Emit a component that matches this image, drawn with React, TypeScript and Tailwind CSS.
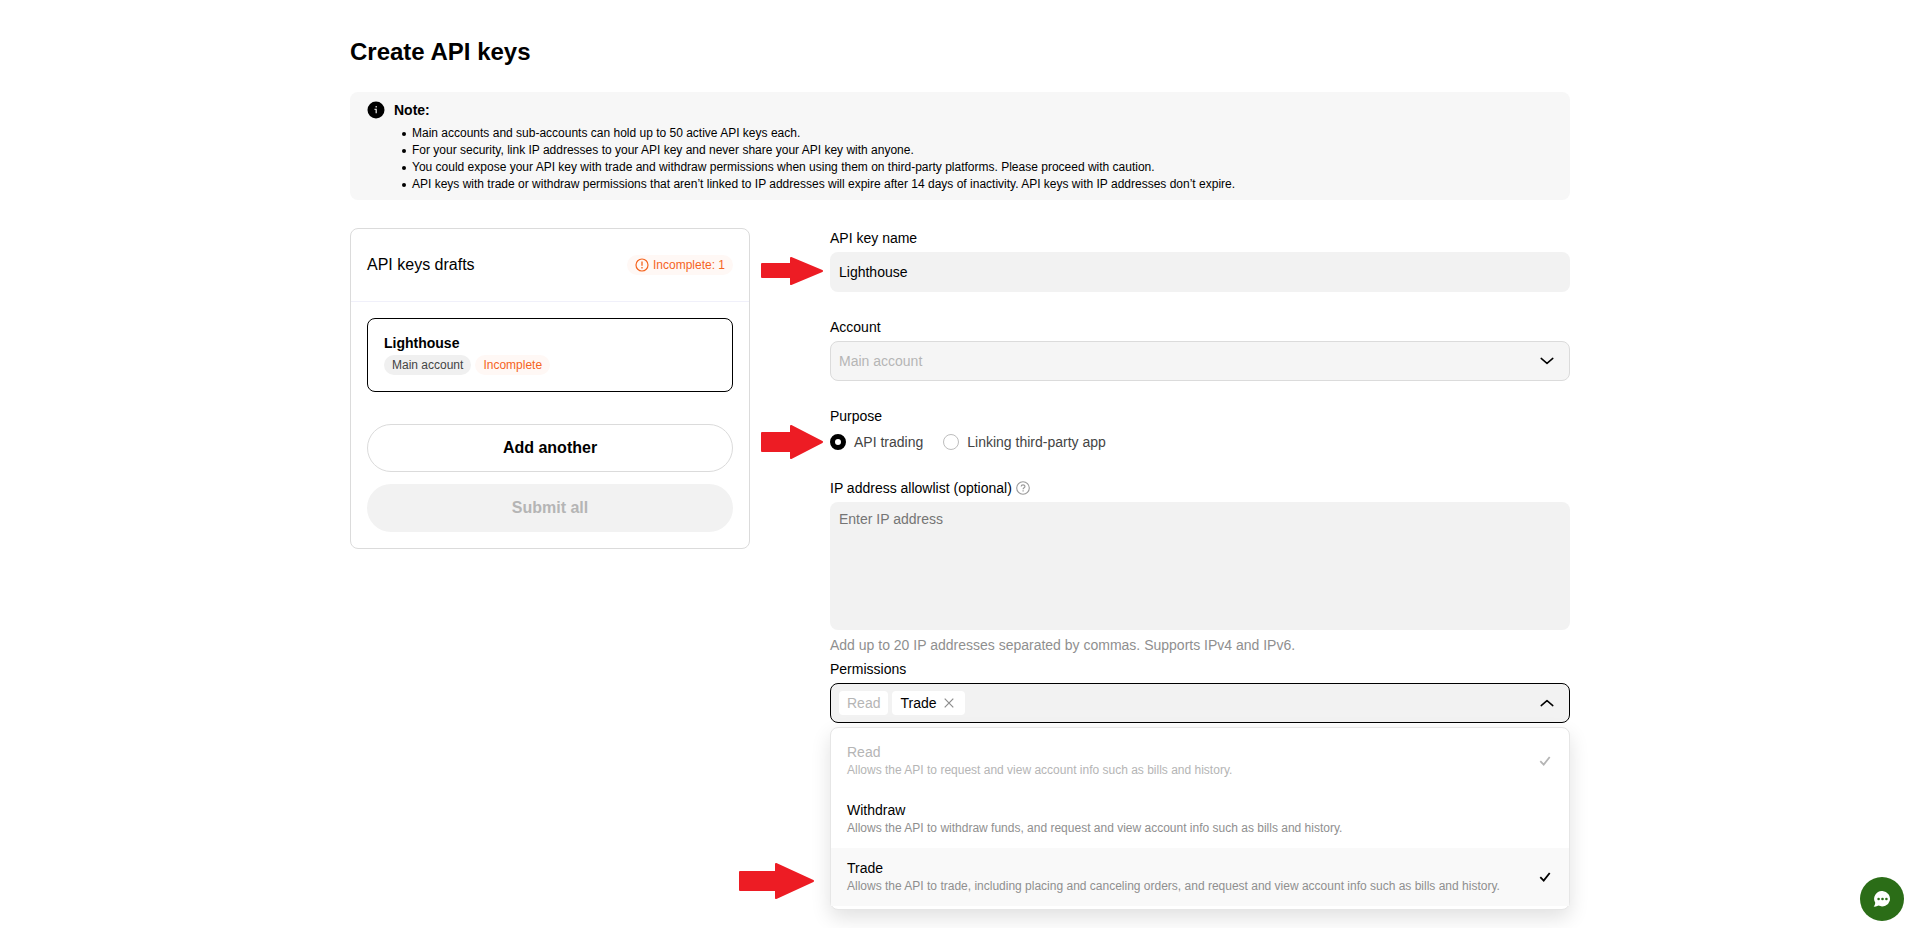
import { useState } from "react";

const notes = [
  "Main accounts and sub-accounts can hold up to 50 active API keys each.",
  "For your security, link IP addresses to your API key and never share your API key with anyone.",
  "You could expose your API key with trade and withdraw permissions when using them on third-party platforms. Please proceed with caution.",
  "API keys with trade or withdraw permissions that aren’t linked to IP addresses will expire after 14 days of inactivity. API keys with IP addresses don’t expire.",
];

const permissions = [
  { name: "Read", text: "Allows the API to request and view account info such as bills and history.", locked: true },
  { name: "Withdraw", text: "Allows the API to withdraw funds, and request and view account info such as bills and history.", locked: false },
  {
    name: "Trade",
    text: "Allows the API to trade, including placing and canceling orders, and request and view account info such as bills and history.",
    locked: false,
  },
];

function Arrow({ className, shaft, head }: { className: string; shaft: string; head: string }) {
  return (
    <svg className={`absolute overflow-visible fill-[#ed1c24] stroke-[#ed1c24] ${className}`} strokeWidth="2" strokeLinejoin="round" aria-hidden="true">
      <path d={shaft} />
      <path d={head} />
    </svg>
  );
}

function Chevron({ up = false }: { up?: boolean }) {
  return (
    <svg className="h-2 w-[14px]" viewBox="0 0 14 8" fill="none" stroke="#000" strokeWidth="1.5" strokeLinecap="round" strokeLinejoin="round" aria-hidden="true">
      <path d={up ? "M1.2 6.6 7 1.6l5.800 5" : "M1.200 1.400 7 6.400l5.800-5"} />
    </svg>
  );
}

function Note() {
  return (
    <section className="mt-6 rounded-lg bg-[#f7f7f7] px-[17px] py-2">
      <div className="flex items-center gap-[9px]">
        <svg className="size-[18px]" viewBox="0 0 18 18" aria-hidden="true">
          <circle cx="9" cy="9" r="8.500" fill="#000" />
          <path d="M9.200 4.900v1.500M7.500 8.300h1.700v4" fill="none" stroke="#ddd" strokeWidth="1.300" />
        </svg>
        <h2 className="text-sm leading-5 font-bold">Note:</h2>
      </div>
      <ul className="mt-1 pt-px pl-[35px] text-xs leading-[17px] -mb-px">
        {notes.map((n) => (
          <li key={n} className="flex items-center gap-[6px]">
            <span className="size-1 shrink-0 rounded-full bg-black" />
            {n}
          </li>
        ))}
      </ul>
    </section>
  );
}

function Drafts() {
  return (
    <aside className="w-[400px] shrink-0 rounded-lg border border-[#dbdbdb]">
      <div className="flex h-[73px] items-center justify-between border-b border-[#f0f0fa] px-4">
        <h2 className="text-base leading-6">API keys drafts</h2>
        <span className="flex h-5 items-center gap-1 rounded-full bg-[#fff8f5] px-2 text-xs text-[#f5641e]">
          <svg className="size-[14px]" viewBox="0 0 14 14" fill="none" stroke="currentColor" aria-hidden="true">
            <circle cx="7" cy="7" r="6" strokeWidth="1.200" />
            <path d="M7 3.600v4.200M7 9v1.400" strokeWidth="1.300" />
          </svg>
          Incomplete: 1
        </span>
      </div>
      <div className="p-4">
        <div className="rounded-lg border border-black px-4 pt-[14px] pb-4">
          <h3 className="mb-0.5 text-sm leading-5 font-bold">Lighthouse</h3>
          <div className="flex gap-1">
            <span className="h-5 rounded-full bg-[#f0f0f0] px-2 text-xs leading-5 text-[#444]">Main account</span>
            <span className="h-5 rounded-full bg-[#fff8f5] px-2 text-xs leading-5 text-[#f5641e]">Incomplete</span>
          </div>
        </div>
        <button type="button" className="mt-8 block h-12 w-full rounded-full border border-[#dbdbdb] text-base font-bold">
          Add another
        </button>
        <button type="button" disabled className="mt-3 block h-12 w-full rounded-full bg-[#f2f2f2] text-base font-bold text-[#b5b5b5]">
          Submit all
        </button>
      </div>
    </aside>
  );
}

function PermissionPicker() {
  const [withdraw, setWithdraw] = useState(false);
  const [trade, setTrade] = useState(true);
  const selected = (name: string) => name === "Read" || (name === "Withdraw" ? withdraw : trade);
  const toggle = (name: string) => (name === "Withdraw" ? setWithdraw(!withdraw) : setTrade(!trade));
  return (
    <div className="mt-1">
      <span id="permissions-label" className="block text-sm leading-5">Permissions</span>
      <div
        role="combobox"
        aria-expanded="true"
        aria-controls="permission-list"
        aria-labelledby="permissions-label"
        tabIndex={0}
        className="mt-1 flex h-10 items-center gap-1 rounded-lg border border-black bg-[#f2f2f2] pr-[15px] pl-2 text-sm"
      >
        {permissions.filter((p) => selected(p.name)).map((p) => (
          <span key={p.name} className={`flex h-6 items-center rounded bg-white px-2 ${p.locked ? "text-[#b5b5b5]" : ""}`}>
            {p.name}
            {!p.locked && (
              <button type="button" aria-label={`Remove ${p.name}`} className="ml-1 flex size-4 items-center justify-center" onClick={() => toggle(p.name)}>
                <svg className="size-[10px]" viewBox="0 0 10 10" stroke="#8c8c8c" strokeWidth="1.200" aria-hidden="true">
                  <path d="m.7.7 8.600 8.600M9.300.7.7 9.300" />
                </svg>
              </button>
            )}
          </span>
        ))}
        <span className="ml-auto"><Chevron up /></span>
      </div>
      <div className="relative">
        <div
          id="permission-list"
          role="listbox"
          aria-multiselectable="true"
          aria-labelledby="permissions-label"
          className="mt-1 rounded-lg border border-[#e6e6e6] bg-white pt-1 pb-[3px] shadow-[0_8px_20px_rgba(0,0,0,0.12)]"
        >
          {permissions.map((p) => (
            <button
              key={p.name}
              type="button"
              role="option"
              aria-selected={selected(p.name)}
              disabled={p.locked}
              onClick={() => toggle(p.name)}
              className={`flex h-[58px] w-full items-center justify-between pr-[18px] pl-4 text-left ${p.locked ? "text-[#b5b5b5]" : ""} ${p.name === "Trade" ? "bg-[#f9f9f9]" : ""}`}
            >
              <span className="pb-0.5">
                <span className="block text-sm leading-5">{p.name}</span>
                <span className={`block text-xs leading-4 ${p.locked ? "" : "text-[#8f8f8f]"}`}>{p.text}</span>
              </span>
              {selected(p.name) && (
                <svg className="h-[10px] w-3" viewBox="0 0 12 10" fill="none" stroke="currentColor" strokeWidth="1.800" aria-hidden="true">
                  <path d="M1.300 5.200 4.700 8.600 10.700 1" />
                </svg>
              )}
            </button>
          ))}
        </div>
        <Arrow className="top-[136px] -left-[91px] h-9 w-[75px]" shaft="M1 9H38V27H1Z" head="M37 1 74 18 37 35Z" />
      </div>
    </div>
  );
}

function KeyForm() {
  return (
    <form className="min-w-0 flex-1">
      <label htmlFor="key-name" className="block text-sm leading-5">API key name</label>
      <div className="relative mt-1">
        <input id="key-name" defaultValue="Lighthouse" className="block h-10 w-full rounded-lg bg-[#f2f2f2] px-[9px] text-sm outline-none" />
        <Arrow className="top-[5px] -left-[69px] h-7 w-[62px]" shaft="M1 7H30V20H1Z" head="M30 1 61 14 30 27Z" />
      </div>

      <label htmlFor="account" className="mt-[25px] block text-sm leading-5">Account</label>
      <div className="relative mt-1">
        <select id="account" disabled className="block h-10 w-full appearance-none rounded-lg border border-[#dbdbdb] bg-[#f5f5f5] px-2 text-sm text-[#b5b5b5] opacity-100">
          <option>Main account</option>
        </select>
        <span className="pointer-events-none absolute inset-y-0 right-4 flex items-center"><Chevron /></span>
      </div>

      <fieldset className="mt-[25px]">
        <legend className="text-sm leading-5">Purpose</legend>
        <div className="relative mt-[6px] flex gap-5 text-sm leading-5 text-[#444]">
          <label className="flex items-center gap-2">
            <input type="radio" name="purpose" defaultChecked className="size-4 appearance-none rounded-full border border-[#bdbdbd] bg-white checked:border-5 checked:border-black" />
            API trading
          </label>
          <label className="flex items-center gap-2">
            <input type="radio" name="purpose" className="size-4 appearance-none rounded-full border border-[#bdbdbd] bg-white checked:border-5 checked:border-black" />
            Linking third-party app
          </label>
          <Arrow className="-top-[7px] -left-[69px] h-[34px] w-[62px]" shaft="M1 8H30V26H1Z" head="M30 1 61 17 30 33Z" />
        </div>
      </fieldset>

      <div className="mt-[26px] flex items-center gap-1">
        <label htmlFor="ips" className="text-sm leading-5">IP address allowlist (optional)</label>
        <svg className="size-[14px]" viewBox="0 0 14 14" fill="none" stroke="#999" aria-hidden="true">
          <circle cx="7" cy="7" r="6.300" strokeWidth="1.100" />
          <path d="M5.200 5.600C5.200 3.200 8.900 3.300 8.900 5.400 8.900 6.800 7.100 6.700 7.100 8.200M7.100 9.200v1.300" strokeWidth="1.200" />
        </svg>
      </div>
      <textarea id="ips" placeholder="Enter IP address" className="mt-1 block h-32 w-full resize-none rounded-lg bg-[#f2f2f2] px-[9px] py-[7px] text-sm leading-5 outline-none placeholder:text-[#757575]" />
      <p className="mt-[5px] text-sm leading-5 text-[#8f8f8f]">Add up to 20 IP addresses separated by commas. Supports IPv4 and IPv6.</p>
      <PermissionPicker />
    </form>
  );
}

export default function App() {
  return (
    <div className="min-h-screen bg-white pl-[3px] font-['Liberation_Sans',Arial,sans-serif] text-black">
      <main className="mx-auto max-w-[1220px] pt-9">
        <h1 className="text-2xl leading-8 font-bold">Create API keys</h1>
        <Note />
        <div className="mt-7 flex items-start gap-20">
          <Drafts />
          <KeyForm />
        </div>
      </main>
      <button type="button" aria-label="Open chat" className="fixed right-[13px] bottom-[7px] flex size-11 items-center justify-center rounded-full bg-[#2b6d17]">
        <svg className="h-4 w-[18px]" viewBox="0 0 18 16" aria-hidden="true">
          <path d="M9.500 0a8 7.700 0 1 1-4 14.600C4 15.500 2.200 16 .6 15.600 1.700 14.600 2.200 13.300 2.200 11.500A8 7.700 0 0 1 9.500 0Z" fill="#fff" />
          <g fill="#2b6d17">
            <circle cx="5.600" cy="8" r="1.300" />
            <circle cx="9.500" cy="8" r="1.300" />
            <circle cx="13.400" cy="8" r="1.300" />
          </g>
        </svg>
      </button>
    </div>
  );
}
